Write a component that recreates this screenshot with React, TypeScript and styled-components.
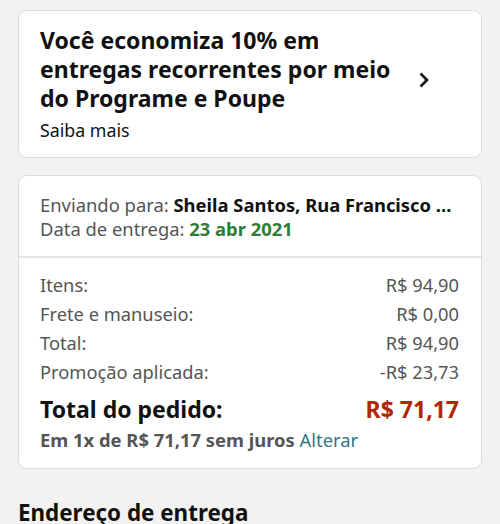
import React from "react";
import styled, { createGlobalStyle } from "styled-components";

const GlobalStyle = createGlobalStyle`
  body {
    margin: 0;
    background: #f2f2f2;
    font-family: "Noto Sans", "Open Sans", sans-serif;
    color: #111;
  }
`;

const Page = styled.div`
  display: flex;
  flex-direction: column;
  gap: 17px;
  padding: 10px 18px 0;
`;

const Card = styled.div`
  background: #fff;
  border: 1px solid #dcdcdc;
  border-radius: 9px;
`;

const PromoCard = styled(Card)`
  display: flex;
  align-items: center;
  padding: 15px 22px 15px 21px;
`;

const PromoText = styled.div`
  flex: 1;
`;

const PromoTitle = styled.div`
  font-size: 23px;
  font-weight: 700;
  line-height: 29px;
  width: 370px;
`;

const PromoLink = styled.div`
  font-size: 17.8px;
  line-height: 24px;
  margin-top: 5px;
`;

const Chevron = styled.svg`
  width: 12px;
  height: 18px;
  margin-right: 29px;
  margin-top: -8px;
`;

const Section = styled.div<{ $pad: string }>`
  padding: ${(p) => p.$pad};
  & + & {
    border-top: 2px solid #e6e6e6;
  }
`;

const InfoLine = styled.div`
  font-size: 18.4px;
  line-height: 24px;
  color: #555;
  white-space: nowrap;
`;

const Strong = styled.span<{ $color?: string }>`
  font-weight: 700;
  color: ${(p) => p.$color || "#111"};
`;

const Row = styled.div`
  display: flex;
  justify-content: space-between;
  font-size: 18.3px;
  line-height: 29px;
  color: #555;
`;

const TotalRow = styled.div`
  display: flex;
  justify-content: space-between;
  font-size: 23px;
  font-weight: 700;
  line-height: 30px;
  margin-top: 8px;
`;

const TotalValue = styled.span`
  color: #b12704;
`;

const Installment = styled.div`
  font-size: 18.4px;
  line-height: 26px;
  font-weight: 700;
  color: #555;
  margin-top: 3px;
`;

const Link = styled.span`
  font-weight: 400;
  color: #2f7883;
`;

const Heading = styled.h2`
  margin: 12px 0 0;
  font-size: 22.4px;
  font-weight: 700;
  line-height: 30px;
`;

const rows: [string, string][] = [
  ["Itens:", "R$ 94,90"],
  ["Frete e manuseio:", "R$ 0,00"],
  ["Total:", "R$ 94,90"],
  ["Promoção aplicada:", "-R$ 23,73"],
];

export default function App() {
  return (
    <>
      <GlobalStyle />
      <Page>
        <PromoCard>
          <PromoText>
            <PromoTitle>Você economiza 10% em entregas recorrentes por meio do Programe e Poupe</PromoTitle>
            <PromoLink>Saiba mais</PromoLink>
          </PromoText>
          <Chevron viewBox="0 0 12 18">
            <path d="M2.5 2.5 L9 9 L2.5 15.5" fill="none" stroke="#111" strokeWidth="2.6" />
          </Chevron>
        </PromoCard>
        <Card>
          <Section $pad="17px 22px 15px 21px">
            <InfoLine>
              Enviando para: <Strong>Sheila Santos, Rua Francisco …</Strong>
            </InfoLine>
            <InfoLine>
              Data de entrega: <Strong $color="#2e7d32">23 abr 2021</Strong>
            </InfoLine>
          </Section>
          <Section $pad="12px 22px 15px 21px">
            {rows.map(([label, value]) => (
              <Row key={label}>
                <span>{label}</span>
                <span>{value}</span>
              </Row>
            ))}
            <TotalRow>
              <span>Total do pedido:</span>
              <TotalValue>R$ 71,17</TotalValue>
            </TotalRow>
            <Installment>
              Em 1x de R$ 71,17 sem juros <Link>Alterar</Link>
            </Installment>
          </Section>
        </Card>
        <Heading>Endereço de entrega</Heading>
      </Page>
    </>
  );
}
